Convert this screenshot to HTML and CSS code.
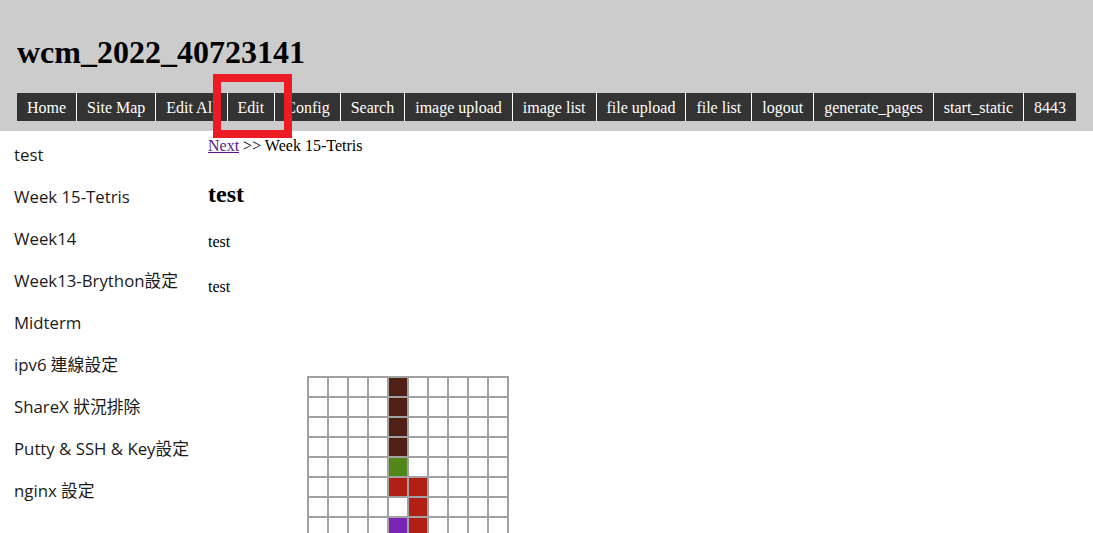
FILE: index.html
```html
<!DOCTYPE html>
<html lang="zh-Hant">
<head>
<meta charset="utf-8">
<title>wcm_2022_40723141</title>
<link rel="stylesheet" href="styles.css">
</head>
<body>
<header class="site-header">
  <h1 class="site-title">wcm_2022_40723141</h1>
  <nav>
    <ul class="nav">
      <li>Home</li>
      <li>Site Map</li>
      <li>Edit All</li>
      <li>Edit</li>
      <li>Config</li>
      <li>Search</li>
      <li>image upload</li>
      <li>image list</li>
      <li>file upload</li>
      <li>file list</li>
      <li>logout</li>
      <li>generate_pages</li>
      <li>start_static</li>
      <li>8443</li>
    </ul>
  </nav>
</header>
<div class="layout">
  <aside class="sidebar">
    <ul class="menu">
      <li>test</li>
      <li>Week 15-Tetris</li>
      <li>Week14</li>
      <li>Week13-Brython設定</li>
      <li>Midterm</li>
      <li>ipv6 連線設定</li>
      <li>ShareX 狀況排除</li>
      <li>Putty &amp; SSH &amp; Key設定</li>
      <li>nginx 設定</li>
    </ul>
  </aside>
  <main class="content">
    <div class="crumb"><a href="#" class="next">Next</a> &gt;&gt; Week 15-Tetris</div>
    <h2 class="page-title">test</h2>
    <p class="para">test</p>
    <p class="para">test</p>
    <div class="board">
      <div class="cell"></div><div class="cell"></div><div class="cell"></div><div class="cell"></div><div class="cell brown"></div><div class="cell"></div><div class="cell"></div><div class="cell"></div><div class="cell"></div><div class="cell"></div>
      <div class="cell"></div><div class="cell"></div><div class="cell"></div><div class="cell"></div><div class="cell brown"></div><div class="cell"></div><div class="cell"></div><div class="cell"></div><div class="cell"></div><div class="cell"></div>
      <div class="cell"></div><div class="cell"></div><div class="cell"></div><div class="cell"></div><div class="cell brown"></div><div class="cell"></div><div class="cell"></div><div class="cell"></div><div class="cell"></div><div class="cell"></div>
      <div class="cell"></div><div class="cell"></div><div class="cell"></div><div class="cell"></div><div class="cell brown"></div><div class="cell"></div><div class="cell"></div><div class="cell"></div><div class="cell"></div><div class="cell"></div>
      <div class="cell"></div><div class="cell"></div><div class="cell"></div><div class="cell"></div><div class="cell green"></div><div class="cell"></div><div class="cell"></div><div class="cell"></div><div class="cell"></div><div class="cell"></div>
      <div class="cell"></div><div class="cell"></div><div class="cell"></div><div class="cell"></div><div class="cell red"></div><div class="cell red"></div><div class="cell"></div><div class="cell"></div><div class="cell"></div><div class="cell"></div>
      <div class="cell"></div><div class="cell"></div><div class="cell"></div><div class="cell"></div><div class="cell"></div><div class="cell red"></div><div class="cell"></div><div class="cell"></div><div class="cell"></div><div class="cell"></div>
      <div class="cell"></div><div class="cell"></div><div class="cell"></div><div class="cell"></div><div class="cell purple"></div><div class="cell red"></div><div class="cell"></div><div class="cell"></div><div class="cell"></div><div class="cell"></div>
    </div>
  </main>
</div>
<div class="highlight"></div>
</body>
</html>
```
FILE: styles.css
```css
html, body {
  margin: 0;
  padding: 0;
  overflow: hidden;
  background: #fff;
}
body {
  font-family: "Liberation Serif", "Times New Roman", serif;
  font-size: 16px;
  color: #000;
}
.site-header {
  background: #cccccc;
  padding: 34px 16px 10px 17px;
}
.site-title {
  margin: 0;
  font-size: 32px;
  font-weight: bold;
  line-height: normal;
}
.nav {
  list-style: none;
  margin: 22px 0 0 0;
  padding: 0;
  display: flex;
  background: transparent;
}
.nav li {
  background: #333333;
  color: #fff;
  font-size: 16px;
  line-height: 18px;
  padding: 6px 10px 4px 10px;
  white-space: nowrap;
}
.nav li + li {
  border-left: 1px solid #fff;
}
.layout {
  display: flex;
  align-items: flex-start;
}
.sidebar {
  width: 208px;
  flex: none;
  padding-left: 14px;
  box-sizing: border-box;
  font-family: "Open Sans", "Noto Sans CJK TC", sans-serif;
  font-size: 16.8px;
  color: #1a1a1a;
}
.menu {
  list-style: none;
  margin: 0;
  padding: 3px 0 0 0;
}
.menu li {
  line-height: 42px;
  white-space: nowrap;
}
.content {
  flex: 1;
  padding-top: 6px;
}
.crumb {
  line-height: normal;
}
.next {
  color: #551a8b;
}
.page-title {
  margin: 26px 0 25px 0;
  font-size: 24px;
  font-weight: bold;
  line-height: normal;
}
.para {
  margin: 0 0 27px 0;
  line-height: normal;
}
.board {
  margin: 80px 0 0 99px;
  display: grid;
  grid-template-columns: repeat(10, 18px);
  grid-auto-rows: 18px;
  gap: 2px;
  padding: 2px;
  width: max-content;
  background: #a2a2a2;
}
.cell {
  background: #fff;
}
.cell.brown { background: #501f16; }
.cell.green { background: #508716; }
.cell.red { background: #b21f15; }
.cell.purple { background: #7824b4; }
.highlight {
  position: absolute;
  left: 213px;
  top: 74px;
  width: 63px;
  height: 48px;
  border: 8px solid #ed1c24;
}
```
